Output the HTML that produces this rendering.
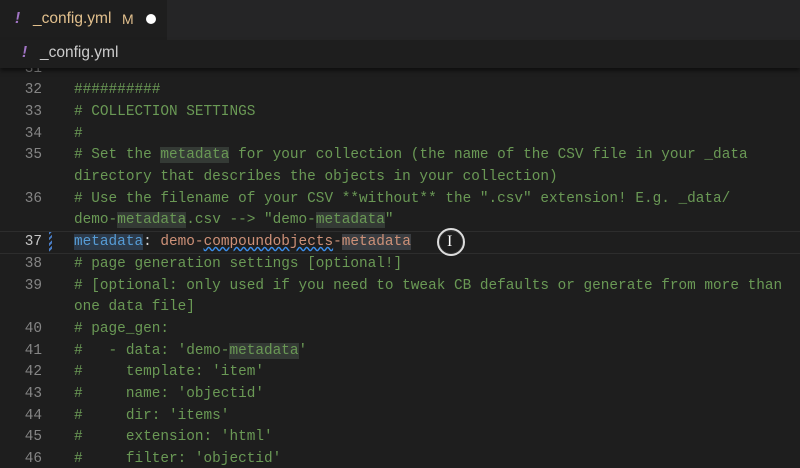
<!DOCTYPE html>
<html><head><style>
body{margin:0;width:800px;height:468px;overflow:hidden;background:#1e1e1e;font-family:"Liberation Sans",sans-serif;position:relative}
.tabbar{position:absolute;top:0;left:0;width:800px;height:40px;background:#252526}
.tab{position:absolute;left:0;top:0;width:167px;height:40px;background:#1e1e1e;color:#e2c08d;font-size:15.5px}
.bc{position:absolute;top:40px;left:0;width:800px;height:28px;background:#1e1e1e;color:#cccccc;font-size:15.5px;box-shadow:0 3px 4px rgba(0,0,0,.5);z-index:2}
.ex{color:#a074c4;font-weight:bold;font-style:italic}
.ln{position:absolute;width:42px;text-align:right;color:#858585;font-family:"Liberation Mono",monospace;font-size:14.4px}
.code{position:absolute;left:74px;font-family:"Liberation Mono",monospace;font-size:14.4px;color:#6a9955;white-space:pre}
.h{background:#343a35}
.k{color:#569cd6}.s{color:#ce9178}.p{color:#d4d4d4}
</style></head><body>
<div class="tabbar"><div class="tab"><span class="ex" style="position:absolute;left:15px;top:10px">!</span><span style="position:absolute;left:33px;top:10px">_config.yml</span><span style="position:absolute;left:122px;top:11px;font-size:14px">M</span><span style="position:absolute;left:146px;top:14px;width:10px;height:10px;border-radius:50%;background:#fff"></span></div></div>
<div class="bc"><span class="ex" style="position:absolute;left:22px;top:4px">!</span><span style="position:absolute;left:40px;top:4px">_config.yml</span></div>
<div style="position:absolute;left:0;top:231px;width:800px;height:21px;border-top:1px solid #2d2d2d;border-bottom:1px solid #2d2d2d"></div>
<div style="position:absolute;left:49px;top:232px;width:3px;height:20px;background:repeating-linear-gradient(135deg,#4a7ec7 0 2px,#1e1e1e 2px 4px)"></div>
<div id="c"></div>
<div style="position:absolute;left:437px;top:228px;width:28px;height:28px;border-radius:50%;border:2px solid #ddd;box-sizing:border-box;box-shadow:0 0 0 1px #333 inset"></div>
<div style="position:absolute;left:447px;top:233px;color:#fff;font-size:16px;font-family:'Liberation Serif',serif">I</div>
<script>
var L=[
[31,''],
[32,'##########'],
[33,'# COLLECTION SETTINGS'],
[34,'#'],
[35,'# Set the <span class="h">metadata</span> for your collection (the name of the CSV file in your _data'],
['','directory that describes the objects in your collection)'],
[36,'# Use the filename of your CSV **without** the ".csv" extension! E.g. _data/'],
['','demo-<span class="h">metadata</span>.csv --> "demo-<span class="h">metadata</span>"'],
[37,'<span class="k" style="background:#2c3a4a">metadata</span><span class="p">: </span><span class="s">demo-<span style="text-decoration:underline wavy #3b8eea">compoundobjects</span>-<span style="background:#3a3d41">metadata</span></span>'],
[38,'# page generation settings [optional!]'],
[39,'# [optional: only used if you need to tweak CB defaults or generate from more than'],
['','one data file]'],
[40,'# page_gen:'],
[41,'#   - data: \'demo-<span class="h">metadata</span>\''],
[42,'#     template: \'item\''],
[43,'#     name: \'objectid\''],
[44,'#     dir: \'items\''],
[45,'#     extension: \'html\''],
[46,'#     filter: \'objectid\'']];
var h='',y=60.5;
L.forEach(function(l){var t=y;h+='<div class="ln" style="top:'+t+'px;'+(l[0]==37?'color:#c6c6c6':'')+'">'+l[0]+'</div><div class="code" style="top:'+t+'px">'+l[1]+'</div>';y+=21.7;});
document.getElementById('c').innerHTML=h;
</script>
</body></html>
